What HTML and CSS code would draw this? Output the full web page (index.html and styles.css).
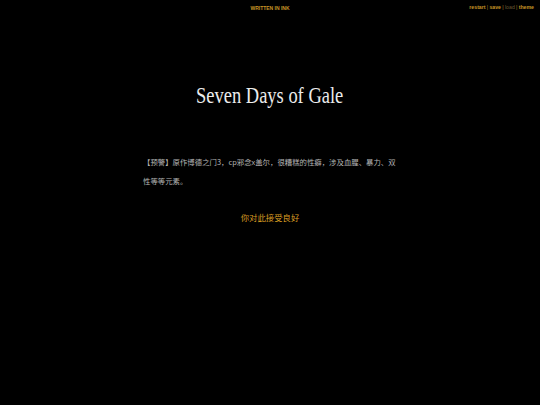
FILE: index.html
```html
<!DOCTYPE html>
<html lang="zh">
<head>
<meta charset="utf-8">
<title>Seven Days of Gale</title>
<link rel="stylesheet" href="styles.css">
</head>
<body>
<div class="header-bar">
  <div class="written">WRITTEN IN INK</div>
  <div class="controls">
    <span class="ctl">restart</span><span class="sep">|</span><span class="ctl">save</span><span class="sep">|</span><span class="ctl disabled">load</span><span class="sep">|</span><span class="ctl">theme</span>
  </div>
</div>
<div class="outer">
  <h1 class="title"><span class="title-text">Seven Days of Gale</span></h1>
  <p class="para">【预警】原作博德之门3，cp邪念x盖尔，很糟糕的性癖，涉及血腥、暴力、双性等等元素。</p>
  <p class="choice"><a>你对此接受良好</a></p>
</div>
</body>
</html>
```
FILE: styles.css
```css
html, body {
  margin: 0;
  padding: 0;
  background: #000;
  height: 100%;
}
body {
  font-family: "Liberation Serif", "Noto Sans CJK SC", serif;
  color: #b9b9b9;
}
.header-bar {
  height: 15px;
  display: flex;
  justify-content: center;
  align-items: center;
  position: relative;
}
.written {
  font-family: "Liberation Sans", sans-serif;
  font-weight: bold;
  font-size: 5px;
  color: #c79526;
}
.controls {
  position: absolute;
  right: 6px;
  top: 4px;
  font-family: "Liberation Sans", sans-serif;
  font-weight: bold;
  font-size: 5.2px;
  color: #c79526;
  display: flex;
  gap: 1.3px;
}
.ctl.disabled { color: #6b5a33; font-weight: normal; }
.sep { color: #a07a20; font-weight: normal; }
.outer {
  width: 254px;
  margin: 0 auto;
  padding-top: 65px;
}
.title {
  font-family: "Liberation Serif", serif;
  font-weight: normal;
  font-size: 24px;
  color: #ececec;
  text-align: center;
  margin: 0 0 42px 0;
  line-height: 30px;
}
.title-text {
  display: inline-block;
  transform: scaleX(0.77);
}
.para {
  font-family: "Noto Sans CJK SC", sans-serif;
  font-size: 7.4px;
  line-height: 19px;
  color: #b5b5b5;
  margin: 0;
}
.choice {
  text-align: center;
  margin: 18px 0 0 0;
  font-family: "Noto Sans CJK SC", sans-serif;
  font-size: 8.4px;
  line-height: 19px;
}
.choice a {
  color: #d79c22;
}
```
